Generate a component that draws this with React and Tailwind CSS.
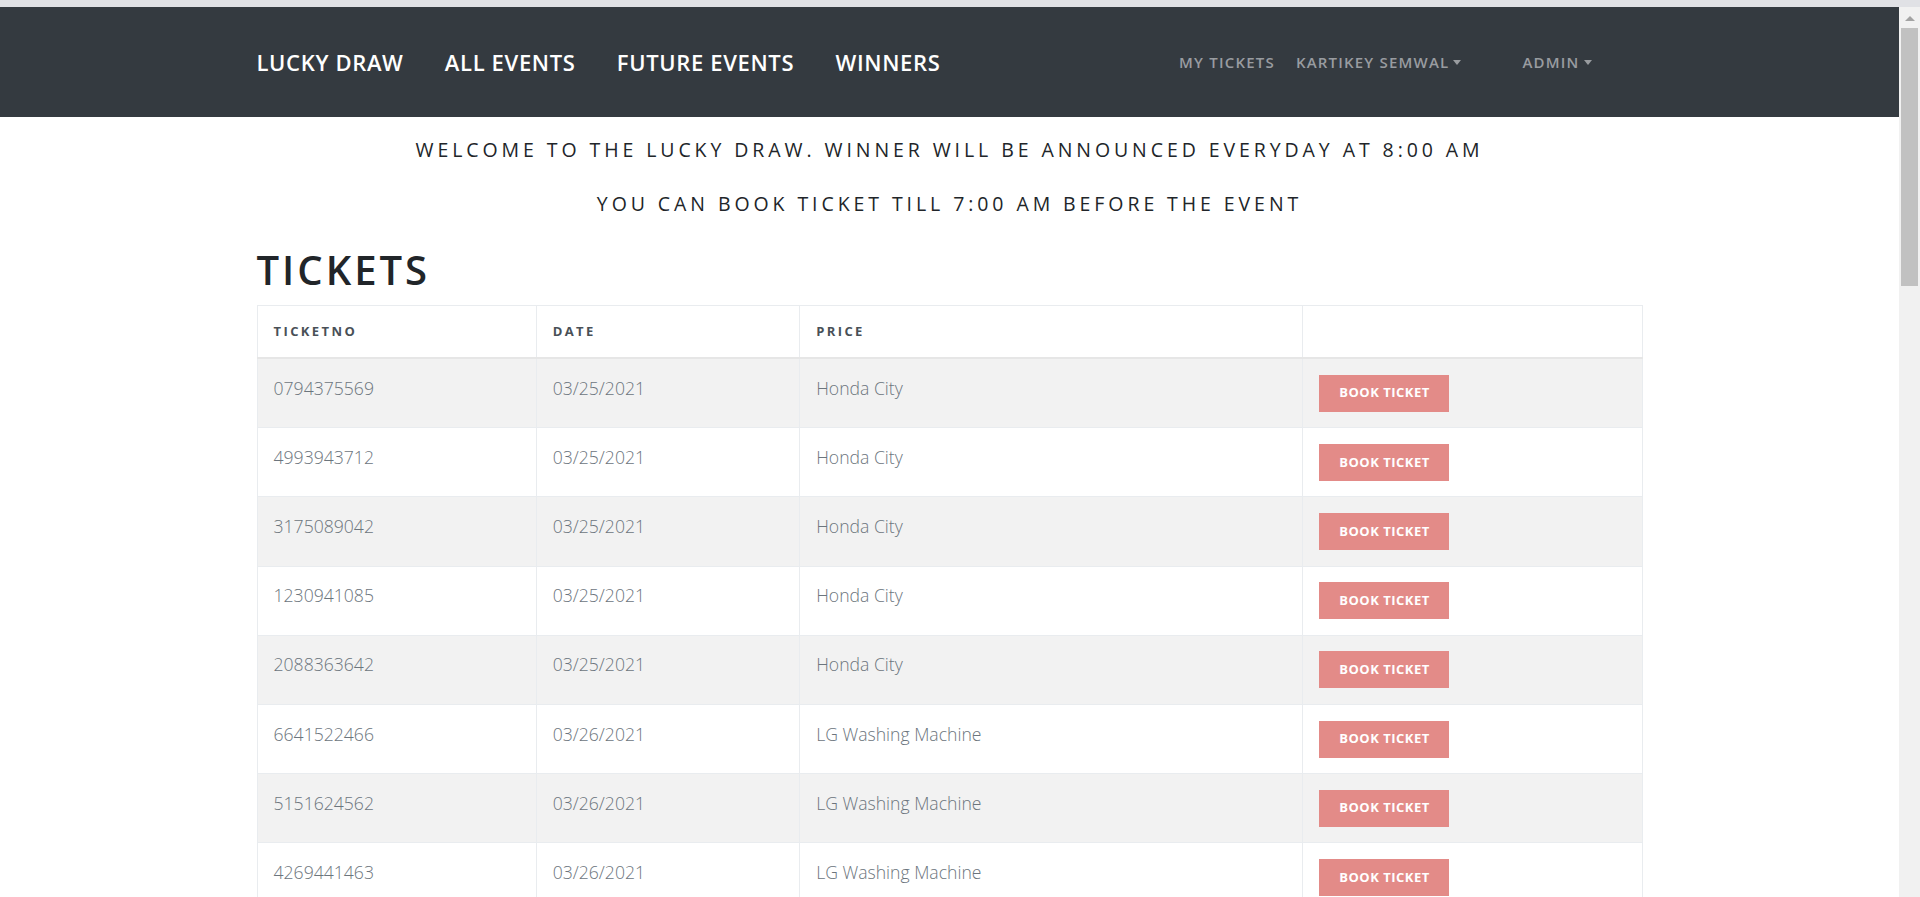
import React from 'react';

const tickets = [
    { no: '0794375569', date: '03/25/2021', prize: 'Honda City' },
    { no: '4993943712', date: '03/25/2021', prize: 'Honda City' },
    { no: '3175089042', date: '03/25/2021', prize: 'Honda City' },
    { no: '1230941085', date: '03/25/2021', prize: 'Honda City' },
    { no: '2088363642', date: '03/25/2021', prize: 'Honda City' },
    { no: '6641522466', date: '03/26/2021', prize: 'LG Washing Machine' },
    { no: '5151624562', date: '03/26/2021', prize: 'LG Washing Machine' },
    { no: '4269441463', date: '03/26/2021', prize: 'LG Washing Machine' },
];

const Caret = () => (
    <span className="inline-block ml-[4px] align-middle w-0 h-0 border-t-[5px] border-t-[#999ca0] border-x-[4.5px] border-x-transparent" />
);

const Navbar = () => {
    return (
        <nav className="h-[110px] bg-[#343a40] shrink-0">
            <div className="w-[1386px] mx-auto h-full flex items-center">
                <div className="flex items-center gap-[41.3px] text-white text-[22px] font-semibold tracking-[0.65px]">
                    <a href="#">LUCKY DRAW</a>
                    <a href="#">ALL EVENTS</a>
                    <a href="#">FUTURE EVENTS</a>
                    <a href="#">WINNERS</a>
                </div>
                <div className="ml-auto mr-[51px] flex items-center text-[15px] font-semibold tracking-[1.2px] text-[#999ca0]">
                    <a href="#">MY TICKETS</a>
                    <a href="#" className="ml-[21px] flex items-center">KARTIKEY SEMWAL<Caret /></a>
                    <a href="#" className="ml-[61px] flex items-center">ADMIN<Caret /></a>
                </div>
            </div>
        </nav>
    );
};

const TicketsTable = () => {
    return (
        <table className="w-[1386px] table-fixed border-collapse border border-[#e9ecef]">
            <colgroup>
                <col className="w-[279.2px]" />
                <col className="w-[263.5px]" />
                <col className="w-[503.3px]" />
                <col />
            </colgroup>
            <thead>
                <tr className="bg-white">
                    {['TICKETNO', 'DATE', 'PRICE', ''].map((h, i) => (
                        <th key={i} className="text-left align-top px-4 py-4 border border-[#e9ecef] border-b-2 border-b-[#e6e6e6] text-[13px] leading-[19px] font-bold tracking-[2.4px] text-[#495057]">
                            {h}
                        </th>
                    ))}
                </tr>
            </thead>
            <tbody>
                {tickets.map((t, i) => (
                    <tr key={t.no} className={i % 2 === 0 ? 'bg-[#f2f2f2]' : 'bg-white'}>
                        <td className="align-top px-4 py-[15.6px] border border-[#e9ecef] text-[17.6px] leading-[26px] font-light text-[#6c757d]">{t.no}</td>
                        <td className="align-top px-4 py-[15.6px] border border-[#e9ecef] text-[17.6px] leading-[26px] font-light text-[#6c757d]">{t.date}</td>
                        <td className="align-top px-4 py-[15.6px] border border-[#e9ecef] text-[17.6px] leading-[26px] font-light text-[#6c757d]">{t.prize}</td>
                        <td className="align-top px-4 py-[15.6px] border border-[#e9ecef]">
                            <button type="button" className="h-[37px] w-[130px] bg-[#e38b88] text-white text-[13px] font-bold tracking-[0.5px] flex items-center justify-center">
                                BOOK TICKET
                            </button>
                        </td>
                    </tr>
                ))}
            </tbody>
        </table>
    );
};

const Scrollbar = () => (
    <div className="w-[21px] shrink-0 bg-[#f1f1f1] flex flex-col items-center">
        <div className="mt-[9px] w-0 h-0 border-b-[5px] border-b-[#a3a3a3] border-x-[5px] border-x-transparent" />
        <div className="mt-[7px] w-[17px] h-[258px] bg-[#c1c1c1]" />
    </div>
);

const App = () => {
    return (
        <div className="h-screen flex flex-col overflow-hidden bg-white" style={{ fontFamily: '"Open Sans", "Liberation Sans", sans-serif' }}>
            <div className="h-[7px] bg-[#e0e1e5] shrink-0" />
            <div className="flex flex-1 min-h-0">
                <div className="flex-1 min-w-0 flex flex-col overflow-hidden">
                    <Navbar />
                    <div className="text-center text-[#212529] font-medium text-[19.5px] leading-[24px] tracking-[3.92px] mt-[21px]">
                        <p>WELCOME TO THE LUCKY DRAW. WINNER WILL BE ANNOUNCED EVERYDAY AT 8:00 AM</p>
                        <p className="mt-[30px]">YOU CAN BOOK TICKET TILL 7:00 AM BEFORE THE EVENT</p>
                    </div>
                    <div className="w-[1386px] mx-auto">
                        <h1 className="mt-[30px] mb-[11px] text-[40px] leading-[48px] font-semibold tracking-[3px] text-[#212529]">TICKETS</h1>
                        <TicketsTable />
                    </div>
                </div>
                <Scrollbar />
            </div>
        </div>
    );
};

export default App;
